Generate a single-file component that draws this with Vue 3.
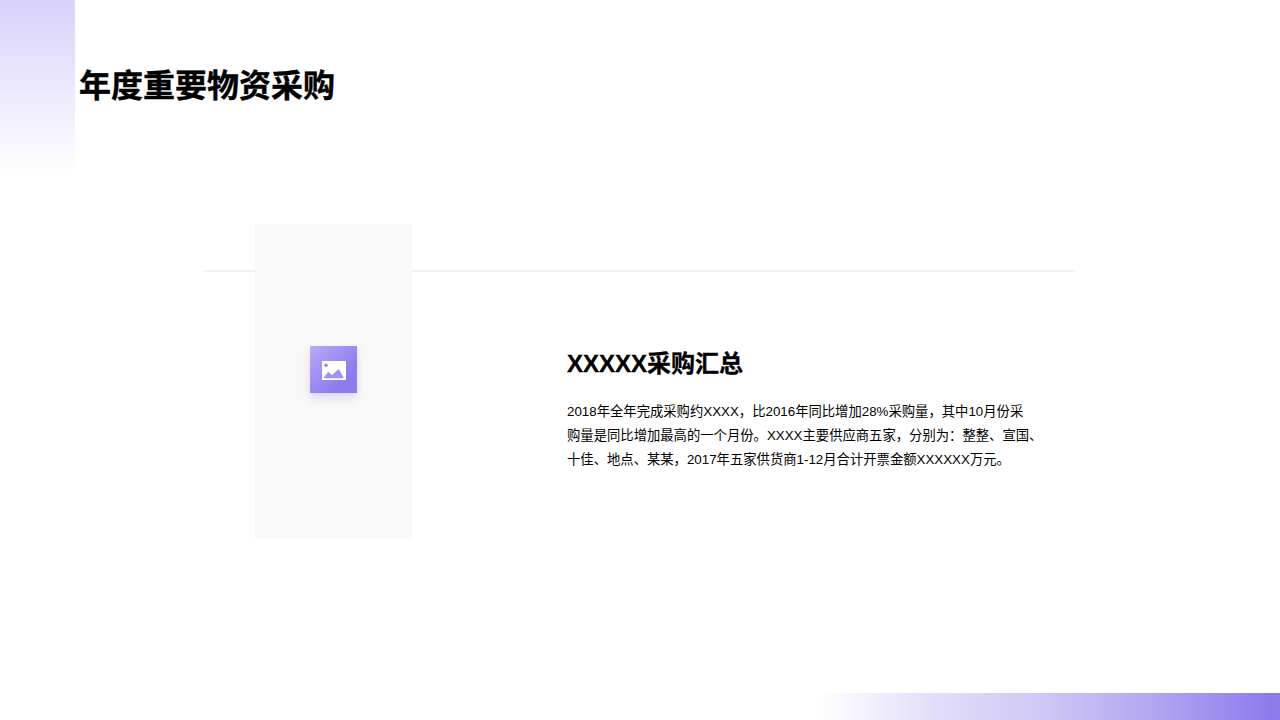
<script setup>
const title = '年度重要物资采购'
const heading = 'XXXXX采购汇总'
const lines = [
  '2018年全年完成采购约XXXX，比2016年同比增加28%采购量，其中10月份采',
  '购量是同比增加最高的一个月份。XXXX主要供应商五家，分别为：整整、宣国、',
  '十佳、地点、某某，2017年五家供货商1-12月合计开票金额XXXXXX万元。',
]
</script>

<template>
  <div class="slide">
    <div class="corner-top"></div>
    <div class="corner-bottom"></div>

    <h1 class="title">{{ title }}</h1>

    <div class="content">
      <div class="rule"></div>
      <div class="picture">
        <div class="picture-icon">
          <svg width="24" height="19" viewBox="0 0 24 19">
            <rect width="24" height="19" fill="#fff" />
            <circle cx="4" cy="4.3" r="1.7" fill="#9a82f0" />
            <path d="M1.3 17.3 L6.3 10.7 L9.8 14 L16.7 8 L22 17.3 Z" fill="#a48ff2" />
          </svg>
        </div>
      </div>
      <div class="text">
        <h2 class="heading">{{ heading }}</h2>
        <p class="body">
          <span v-for="line in lines" :key="line" class="line">{{ line }}</span>
        </p>
      </div>
    </div>
  </div>
</template>

<style scoped>
.slide {
  position: relative;
  width: 1280px;
  height: 720px;
  overflow: hidden;
  background: #fff;
  color: #000;
  font-family: "Liberation Sans", "Noto Sans CJK SC", sans-serif;
}

/* corner decoration */
.corner-top {
  position: absolute;
  top: 0;
  left: 0;
  width: 75px;
  height: 175px;
  background: linear-gradient(180deg, #d8d2fa 0%, #ffffff 100%);
}

.corner-bottom {
  position: absolute;
  right: 0;
  bottom: 0;
  width: 462px;
  height: 27px;
  background: linear-gradient(90deg, #ffffff 0%, #e2def9 25%, #cfc8f6 48%, #b3a7f1 72%, #8d7bec 98%);
}

.title {
  position: relative;
  margin: 0;
  padding: 68px 0 0 79px;
  font-size: 32px;
  line-height: 37px;
  font-weight: 700;
  -webkit-text-stroke: 0.4px #000;
}

.content {
  position: relative;
  display: flex;
  margin: 119px 0 0 255px;
}

/* thin line running behind the picture */
.rule {
  position: absolute;
  top: 46px;
  left: -51px;
  width: 871px;
  height: 2px;
  background: #f1f1f1;
}

.picture {
  position: relative;
  display: flex;
  align-items: center;
  justify-content: center;
  box-sizing: border-box;
  width: 157px;
  height: 315px;
  padding-bottom: 25px;
  background: #f8f8f8;
}

.picture-icon {
  display: flex;
  align-items: center;
  justify-content: center;
  width: 47px;
  height: 47px;
  padding-top: 2px;
  box-sizing: border-box;
  background: linear-gradient(135deg, #bcaaf7 0%, #8f7bee 70%);
  box-shadow: 0 5px 8px rgba(143, 123, 238, 0.25);
}

.text {
  margin: 125px 0 0 155px;
}

.heading {
  margin: 0;
  font-size: 24px;
  line-height: 30px;
  font-weight: 700;
  -webkit-text-stroke: 0.3px #000;
}

.body {
  margin: 21px 0 0;
  font-size: 13.33px;
  line-height: 24px;
  white-space: nowrap;
}

.line {
  display: block;
}
</style>
